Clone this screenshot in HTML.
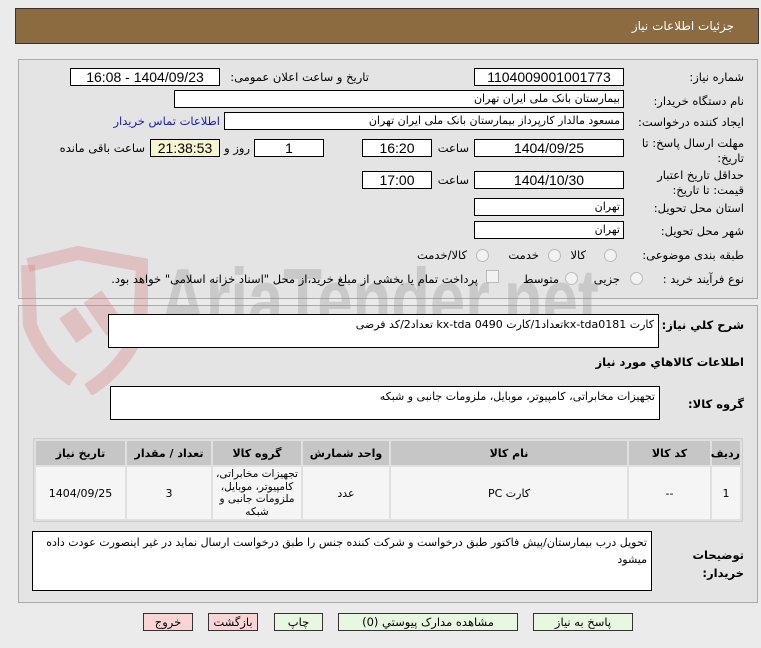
<!DOCTYPE html>
<html><head><meta charset="utf-8"><style>
body{margin:0;width:761px;height:648px;background:#ebebeb;font-family:"DejaVu Sans",sans-serif;font-size:11px;color:#000;position:relative;overflow:hidden}
.a{position:absolute}
.hdr{left:15px;top:8px;width:744px;height:36px;background:#8b6b3f;border:1px solid #333;box-sizing:border-box}
.hdr span{position:absolute;right:24px;top:10px;color:#fff;font-size:12px}
.pnl{border:1px solid #aaa;background:#e4e4e4;box-sizing:border-box}
.box{position:absolute;background:#fff;border:1px solid #000;box-sizing:border-box;height:18px;font-family:"Liberation Sans","DejaVu Sans",sans-serif;font-size:14px;line-height:16px;text-align:center;direction:rtl;white-space:nowrap}
.box.r{text-align:right;padding-right:3px;font-family:"DejaVu Sans",sans-serif;font-size:11px}
.lbl{position:absolute;direction:rtl;white-space:nowrap;font-size:11.5px;text-align:right}
.ta{position:absolute;background:#fff;border:1px solid #000;box-sizing:border-box;direction:rtl;text-align:right;padding:3px 4px;font-size:11px;line-height:20px}
.rad{position:absolute;width:11px;height:11px;border:1px solid #bbb;border-radius:50%;background:#f2f2f2}
table{position:absolute;left:33px;top:438px;width:710px;height:84px;border-collapse:separate;border-spacing:2px;background:#e0e0e0;border:1px solid #ccc;direction:rtl;table-layout:fixed}
th{background:#c6c6c6;height:24px;font-size:11px;font-weight:bold;padding:0}
td{background:#f5f5f5;height:52px;text-align:center;font-size:11px;line-height:13px;padding:0;overflow:hidden}
.btn{position:absolute;top:613px;height:18px;border:1px solid #333;box-sizing:border-box;text-align:center;font-size:11.5px;line-height:16px;direction:rtl}
</style></head><body>
<div class="a hdr"><span>جزئیات اطلاعات نیاز</span></div>
<div class="a pnl" style="left:18px;top:59px;width:740px;height:240px"></div>
<div class="a pnl" style="left:18px;top:305px;width:740px;height:298px"></div>

<svg class="a" style="left:18px;top:245px" width="130" height="150" viewBox="0 0 130 150"><path d="M10 20 L60 8 L125 20 L122 80 Q110 120 70 145" fill="none" stroke="rgba(215,130,130,0.35)" stroke-width="14"/><path d="M10 20 L12 80 Q25 115 55 135" fill="none" stroke="rgba(215,130,130,0.35)" stroke-width="14"/><rect x="48" y="65" width="20" height="30" transform="rotate(-35 58 80)" fill="rgba(215,130,130,0.35)"/><rect x="75" y="48" width="22" height="40" transform="rotate(-35 86 68)" fill="rgba(215,130,130,0.35)"/></svg>
<div class="a" style="left:160px;top:250px;font-size:88px;font-weight:bold;color:rgba(140,140,140,0.3);font-family:'Liberation Sans',sans-serif;line-height:100px;transform:scaleX(0.72);transform-origin:0 0;white-space:nowrap">AriaTender.net</div>

<div class="lbl" style="right:17px;top:70px">شماره نیاز:</div>
<div class="box" style="left:474px;top:68px;width:150px">1104009001001773</div>
<div class="lbl" style="right:392px;top:70px">تاریخ و ساعت اعلان عمومی:</div>
<div class="box" style="left:70px;top:68px;width:150px">1404/09/23 - 16:08</div>

<div class="lbl" style="right:17px;top:94px">نام دستگاه خریدار:</div>
<div class="box r" style="left:174px;top:90px;width:450px">بیمارستان بانک ملی ایران تهران</div>

<div class="lbl" style="right:17px;top:115px">ایجاد کننده درخواست:</div>
<div class="box r" style="left:224px;top:112px;width:400px">مسعود مالدار کارپرداز بیمارستان بانک ملی ایران تهران</div>
<div class="lbl" style="right:541px;top:114px;color:#1a1acc">اطلاعات تماس خریدار</div>

<div class="lbl" style="right:17px;top:136px;line-height:15px">مهلت ارسال پاسخ: تا<br>تاریخ:</div>
<div class="box" style="left:474px;top:139px;width:150px">1404/09/25</div>
<div class="lbl" style="right:292px;top:141px">ساعت</div>
<div class="box" style="left:362px;top:139px;width:70px">16:20</div>
<div class="box" style="left:254px;top:139px;width:70px">1</div>
<div class="lbl" style="right:511px;top:141px">روز و</div>
<div class="box" style="left:150px;top:139px;width:70px;background:#f5f5d0">21:38:53</div>
<div class="lbl" style="right:616px;top:141px">ساعت باقی مانده</div>

<div class="lbl" style="right:17px;top:168px;line-height:15px">حداقل تاریخ اعتبار<br>قیمت: تا تاریخ:</div>
<div class="box" style="left:474px;top:171px;width:150px">1404/10/30</div>
<div class="lbl" style="right:292px;top:173px">ساعت</div>
<div class="box" style="left:362px;top:171px;width:70px">17:00</div>

<div class="lbl" style="right:17px;top:201px">استان محل تحویل:</div>
<div class="box r" style="left:474px;top:198px;width:150px">تهران</div>
<div class="lbl" style="right:17px;top:224px">شهر محل تحویل:</div>
<div class="box r" style="left:474px;top:221px;width:150px">تهران</div>

<div class="lbl" style="right:17px;top:248px">طبقه بندی موضوعی:</div>
<div class="rad" style="left:604px;top:249px"></div><div class="lbl" style="right:175px;top:248px">کالا</div>
<div class="rad" style="left:548px;top:249px"></div><div class="lbl" style="right:222px;top:248px">خدمت</div>
<div class="rad" style="left:476px;top:249px"></div><div class="lbl" style="right:294px;top:248px">کالا/خدمت</div>

<div class="lbl" style="right:17px;top:272px">نوع فرآیند خرید :</div>
<div class="rad" style="left:630px;top:272px"></div><div class="lbl" style="right:141px;top:272px">جزیی</div>
<div class="rad" style="left:565px;top:272px"></div><div class="lbl" style="right:202px;top:272px">متوسط</div>
<div class="a" style="left:486px;top:270px;width:11px;height:11px;border:1px solid #bbb;background:#f2f2f2"></div>
<div class="lbl" style="right:283px;top:272px">پرداخت تمام یا بخشی از مبلغ خرید،از محل "اسناد خزانه اسلامی" خواهد بود.</div>

<div class="lbl" style="right:17px;top:318px;font-weight:bold">شرح کلي نياز:</div>
<div class="ta" style="left:108px;top:314px;width:551px;height:34px;line-height:14px">کارت kx-tda0181تعداد1/کارت kx-tda 0490 تعداد2/کد فرضی</div>
<div class="lbl" style="right:17px;top:355px;font-weight:bold">اطلاعات کالاهاي مورد نياز</div>
<div class="lbl" style="right:17px;top:397px;font-weight:bold">گروه کالا:</div>
<div class="ta" style="left:110px;top:386px;width:550px;height:34px;line-height:14px">تجهیزات مخابراتی، کامپیوتر، موبایل، ملزومات جانبی و شبکه</div>

<table>
<tr><th style="width:28px">ردیف</th><th style="width:81px">کد کالا</th><th style="width:236px">نام کالا</th><th style="width:86px">واحد شمارش</th><th style="width:88px">گروه کالا</th><th style="width:84px">تعداد / مقدار</th><th>تاریخ نیاز</th></tr>
<tr><td>1</td><td>--</td><td>کارت PC</td><td>عدد</td><td style="font-size:10.5px;line-height:12.5px">تجهیزات مخابراتی، کامپیوتر، موبایل، ملزومات جانبی و شبکه</td><td>3</td><td>1404/09/25</td></tr>
</table>

<div class="lbl" style="right:17px;top:546px;font-weight:bold;line-height:18px">توضیحات<br>خریدار:</div>
<div class="ta" style="left:32px;top:531px;width:620px;height:60px;line-height:17px;padding-top:2px">تحویل درب بیمارستان/پیش فاکتور طبق درخواست و شرکت کننده جنس را طبق درخواست  ارسال نماید در غیر اینصورت عودت داده میشود</div>

<div class="btn" style="left:533px;width:100px;background:#e8f8e0">پاسخ به نیاز</div>
<div class="btn" style="left:338px;width:180px;background:#e8f8e0">مشاهده مدارک پیوستي (0)</div>
<div class="btn" style="left:274px;width:49px;background:#e8f8e0">چاپ</div>
<div class="btn" style="left:208px;width:50px;background:#fbd5d5">بازگشت</div>
<div class="btn" style="left:143px;width:50px;background:#fbd5d5">خروج</div>
</body></html>
